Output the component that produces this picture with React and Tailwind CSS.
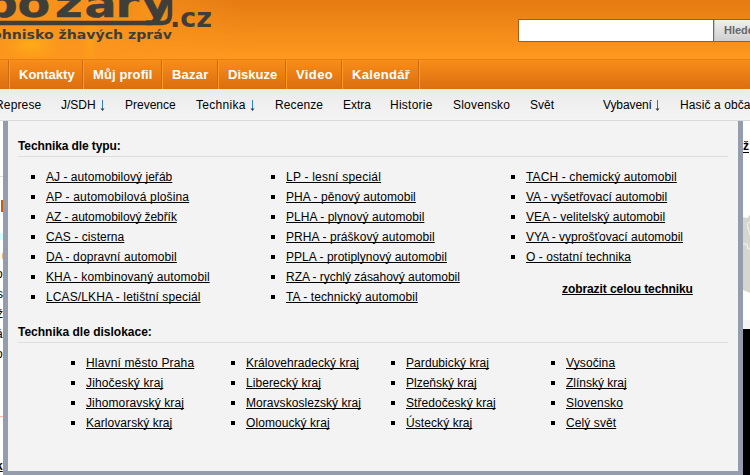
const tabs = [
  ['Kontakty', 'w-[74px]', ''],
  ['Můj profil', 'w-[79px]', 'tracking-[0.1px]'],
  ['Bazar', 'w-[56px]', 'tracking-[0.2px]'],
  ['Diskuze', 'w-[68px]', ''],
  ['Video', 'w-[56px]', 'tracking-[0.4px]'],
  ['Kalendář', 'w-[77px]', 'tracking-[0.3px]'],
];

const sections = [
  { label: 'Represe', width: 'w-[66px] tracking-[0.15px]' },
  { label: 'J/SDH', width: 'w-[64px]', arrow: '#2f7fd0', gap: 'ml-[4px]' },
  { label: 'Prevence', width: 'w-[71px]' },
  { label: 'Technika', width: 'w-[79px] tracking-[0.3px]', arrow: '#2f7fd0', gap: 'ml-[4px]' },
  { label: 'Recenze', width: 'w-[68px] tracking-[0.1px]' },
  { label: 'Extra', width: 'w-[47px]' },
  { label: 'Historie', width: 'w-[63px] tracking-[0.25px]' },
  { label: 'Slovensko', width: 'w-[77px] tracking-[0.2px]' },
  { label: 'Svět', width: 'w-[73px]' },
  { label: 'Vybavení', width: 'w-[77px] tracking-[-0.1px]', arrow: '#80604a', gap: 'ml-[3px]' },
  { label: 'Hasič a občan', width: 'w-[90px] tracking-[0.1px]' },
];

const types = [
  [
    ['AJ - automobilový jeřáb', 'tracking-[0.04px]'],
    ['AP - automobilová plošina', 'tracking-[0.16px]'],
    ['AZ - automobilový žebřík', 'tracking-[-0.08px]'],
    ['CAS - cisterna', 'tracking-[0.07px]'],
    ['DA - dopravní automobil', 'tracking-[0.09px]'],
    ['KHA - kombinovaný automobil', 'tracking-[0.11px]'],
    ['LCAS/LKHA - letištní speciál', 'tracking-[0.11px]'],
  ],
  [
    ['LP - lesní speciál', 'tracking-[0.22px]'],
    ['PHA - pěnový automobil', 'tracking-[0.05px]'],
    ['PLHA - plynový automobil', 'tracking-[0.04px]'],
    ['PRHA - práškový automobil', 'tracking-[0.08px]'],
    ['PPLA - protiplynový automobil', 'tracking-[0.03px]'],
    ['RZA - rychlý zásahový automobil', 'tracking-[-0.03px]'],
    ['TA - technický automobil', 'tracking-[0.08px]'],
  ],
  [
    ['TACH - chemický automobil', 'tracking-[0.12px]'],
    ['VA - vyšetřovací automobil', ''],
    ['VEA - velitelský automobil', 'tracking-[0.04px]'],
    ['VYA - vyprošťovací automobil', ''],
    ['O - ostatní technika', 'tracking-[0.05px]'],
  ],
];

const regions = [
  [
    ['Hlavní město Praha', 'tracking-[0.16px]'],
    ['Jihočeský kraj', 'tracking-[0.14px]'],
    ['Jihomoravský kraj', 'tracking-[0.12px]'],
    ['Karlovarský kraj', 'tracking-[0.06px]'],
  ],
  [
    ['Královehradecký kraj', 'tracking-[0.05px]'],
    ['Liberecký kraj', 'tracking-[0.07px]'],
    ['Moravskoslezský kraj', 'tracking-[0.05px]'],
    ['Olomoucký kraj', 'tracking-[0.07px]'],
  ],
  [
    ['Pardubický kraj', 'tracking-[0.07px]'],
    ['Plzeňský kraj', ''],
    ['Středočeský kraj', 'tracking-[0.06px]'],
    ['Ústecký kraj', 'tracking-[0.08px]'],
  ],
  [
    ['Vysočina', 'tracking-[0.12px]'],
    ['Zlínský kraj', ''],
    ['Slovensko', 'tracking-[0.2px]'],
    ['Celý svět', 'tracking-[0.1px]'],
  ],
];

function Logo() {
  return (
    <svg width="260" height="59" className="shrink-0" fontFamily="'DejaVu Sans', sans-serif" fontWeight="700" fill="#403e39">
      <defs>
        <radialGradient id="glow">
          <stop offset="0" stopColor="#ffb414" stopOpacity="0.75" />
          <stop offset="1" stopColor="#ffa51c" stopOpacity="0" />
        </radialGradient>
        <linearGradient id="haze">
          <stop offset="0.4" stopColor="#fb951d" stopOpacity="0.85" />
          <stop offset="1" stopColor="#fb951d" stopOpacity="0" />
        </linearGradient>
      </defs>
      <rect width="240" height="59" fill="url(#haze)" />
      <ellipse cx="32" cy="45" rx="34" ry="18" fill="url(#glow)" />
      <ellipse cx="90" cy="38" rx="11" ry="42" fill="url(#glow)" opacity="0.5" />
      <ellipse cx="148" cy="8" rx="20" ry="30" fill="url(#glow)" opacity="0.3" />
      <g transform="translate(0 16.5) scale(1.25 1)">
        <text x="-13 14 44 67.6 92.5 113.2" y="0" fontSize="38" stroke="#403e39" strokeWidth="0.5">požáry</text>
      </g>
      <path d="M0 23H162Q170 23 170 15V0" fill="none" stroke="#403e39" strokeWidth="4.5" />
      <text x="170" y="27" fontSize="27" textLength="42" lengthAdjust="spacingAndGlyphs">.cz</text>
      <text x="-8" y="38.5" fontSize="12" textLength="180" lengthAdjust="spacingAndGlyphs">ohnisko žhavých zpráv</text>
    </svg>
  );
}

function DownArrow({ color, gap }) {
  return (
    <svg width="5" height="11" className={`${gap} mt-[2px] shrink-0`}>
      <path d="M2.5 0V10" stroke={color} />
      <path d="M0.5 8.5H4.5L2.5 11Z" fill="#333c48" />
    </svg>
  );
}

function LinkList({ items, width }) {
  return (
    <ul className={width}>
      {items.map(([label, tracking]) => (
        <li key={label} className="flex h-5 items-center whitespace-nowrap">
          <span className="mr-[11px] h-1 w-1 shrink-0 bg-black" />
          <a className={`${tracking} underline underline-offset-1 [text-decoration-skip-ink:none]`}>{label}</a>
        </li>
      ))}
    </ul>
  );
}

export default function App() {
  return (
    <div className="h-[475px] w-[750px] overflow-hidden bg-white font-['Liberation_Sans',Arial,sans-serif] text-xs text-black">
      <header className="flex h-[59px] bg-linear-to-b from-[#e57b13] to-[#ff991e]">
        <Logo />
        <div className="ml-[258px] mt-[19px] flex h-[23px] w-[260px] shrink-0 border border-[#a95a13]">
          <div className="w-[195px] shrink-0 border-r border-[#a95a13] bg-white" />
          <div className="flex w-[64px] shrink-0 items-center border-l border-[#c4c4c4] bg-linear-to-b from-[#f0f0f0] to-[#cfcfcf] pl-[9px] text-[11px] font-bold text-[#666]">Hledej</div>
        </div>
      </header>

      <nav className="flex h-[30px] border-t border-[#e8800f] bg-linear-to-b from-[#f88d19] to-[#dc6e10] text-[13px] font-bold text-white">
        <div className="w-[10px] shrink-0 border-r border-[#ff9a28]">
          <div className="h-full w-[9px] border-r border-[#cf6810]" />
        </div>
        {tabs.map(([label, width, tracking]) => (
          <div key={label} className={`${width} ${tracking} shrink-0 border-r border-[#ff9a28]`}>
            <div className="flex h-full items-center whitespace-nowrap border-r border-[#cf6810] pl-[9px]">{label}</div>
          </div>
        ))}
      </nav>

      <nav className="flex h-[32px] border-b border-[#d9d9d9] bg-linear-to-b from-[#ebebeb] to-[#f4f4f4]">
        <div className="-ml-[5px] flex h-[31px]">
          {sections.map(({ label, width, arrow, gap }) => (
            <div key={label} className={`${width} flex shrink-0 items-center whitespace-nowrap`}>
              {label}
              {arrow && <DownArrow color={arrow} gap={gap} />}
            </div>
          ))}
        </div>
      </nav>

      <div className="flex h-[354px]">
        <aside className="h-full w-[3px] shrink-0 overflow-hidden leading-5">
          <div className="mt-[55px] h-px bg-[#ddd]" />
          <div className="mt-[23px] ml-px h-[12px] bg-[#cf5b08]" />
          <div className="mt-[21px] h-[7px] bg-[#d8ffff]" />
          <div className="mt-[13px] ml-[2px] h-[6px] bg-[#f5b878]" />
          <div className="mt-[5px] -ml-1 h-5">o</div>
          <div className="-ml-[3px] h-5">s</div>
          <div className="-ml-[3px] h-5">ž</div>
          <div className="-ml-[4px] h-5">á</div>
          <div className="-ml-1 h-5">o</div>
          <div className="mt-[52px] h-px bg-[#ffb7a0]" />
          <div className="mt-[39px] -ml-1 h-5 font-bold underline">k</div>
        </aside>

        <main className="h-full w-[740px] shrink-0 border-x-5 border-b-4 border-[#959cac] bg-[#f3f3f3] px-[10px]">
          <h2 className="mt-[15px] h-[21px] border-b border-[#dedede] leading-5 font-bold tracking-[-0.1px]">Technika dle typu:</h2>
          <div className="mt-[10px] flex h-[140px] pl-[13px]">
            <LinkList items={types[0]} width="w-[240px]" />
            <LinkList items={types[1]} width="w-[240px]" />
            <div>
              <LinkList items={types[2]} width="w-[200px]" />
              <a className="mt-3 ml-[51px] block leading-5 font-bold tracking-[-0.08px] whitespace-nowrap underline underline-offset-1 [text-decoration-skip-ink:none]">zobrazit celou techniku</a>
            </div>
          </div>
          <h2 className="mt-[15px] h-[21px] border-b border-[#dedede] leading-5 font-bold">Technika dle dislokace:</h2>
          <div className="mt-[10px] flex pl-[53px]">
            {regions.map((items) => (
              <LinkList key={items[0][0]} items={items} width="w-[160px] shrink-0" />
            ))}
          </div>
        </main>

        <aside className="h-full w-[7px] shrink-0 overflow-hidden">
          <div className="mt-[15px] h-5 leading-5 font-bold underline underline-offset-2">ž</div>
          <svg width="7" height="78" className="mt-[59px] block">
            <path d="M0 2L4 3L7 0V78L0 75Z" fill="#d5d6d0" />
            <path d="M7 7Q3 8 5 13T7 20M0 29L4 29L5 34L7 34" fill="none" stroke="#f5f5f2" />
          </svg>
          <div className="mt-[27px] h-[9px] bg-[#f4f4f4]" />
          <div className="h-[146px] bg-black" />
        </aside>
      </div>
    </div>
  );
}
